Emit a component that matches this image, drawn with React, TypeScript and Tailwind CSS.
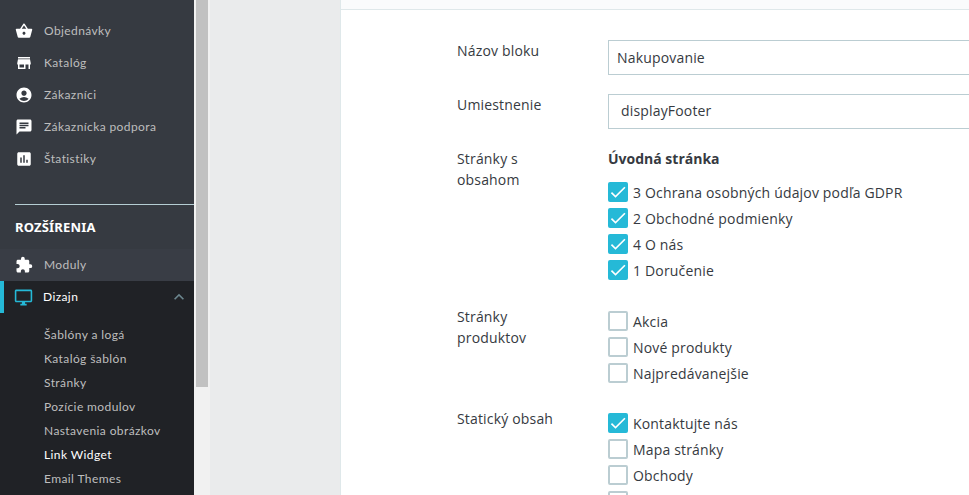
import { MdAccountCircle, MdAssessment, MdCheck, MdChat, MdExtension, MdKeyboardArrowUp, MdOutlineDesktopWindows, MdShoppingBasket, MdStore } from 'react-icons/md'
import type { ReactNode } from 'react'

function NavItem({ icon, label }: { icon: ReactNode; label: string }) {
  return (
    <div className="flex h-8 items-center pl-[15px]">
      <span className="flex w-[29px] text-white">{icon}</span>
      <span className="text-xs tracking-[0.4px] text-[#bebebe]">{label}</span>
    </div>
  )
}

function SubItem({ label, active }: { label: string; active?: boolean }) {
  return (
    <div className={`flex h-6 items-center pl-11 text-xs tracking-[0.4px] ${active ? 'text-white' : 'text-[#bebebe]'}`}>
      {label}
    </div>
  )
}

function Sidebar() {
  return (
    <div className="h-full w-[194px] shrink-0 overflow-hidden bg-[#363a41] font-['Lato',sans-serif]">
      <div className="pt-[15px]">
        <NavItem icon={<MdShoppingBasket size={18} />} label="Objednávky" />
        <NavItem icon={<MdStore size={18} />} label="Katalóg" />
        <NavItem icon={<MdAccountCircle size={18} />} label="Zákazníci" />
        <NavItem icon={<MdChat size={18} />} label="Zákaznícka podpora" />
        <NavItem icon={<MdAssessment size={18} />} label="Štatistiky" />
      </div>
      <div className="mt-[29px] ml-[15px] border-t border-[#b5cdd3]" />
      <div className="mt-[13px] pl-[15px] font-['Noto_Sans',sans-serif] text-[13px] leading-[18px] font-bold text-white">ROZŠÍRENIA</div>
      <div className="mt-[13px] bg-[#393d45]">
        <NavItem icon={<MdExtension size={18} />} label="Moduly" />
      </div>
      <div className="h-full bg-[#202226]">
        <div className="flex h-8 items-center border-l-4 border-[#25b9d7] pl-[10px]">
          <span className="flex w-[29px] text-[#25b9d7]"><MdOutlineDesktopWindows size={19} /></span>
          <span className="flex-1 text-xs tracking-[0.4px] text-white">Dizajn</span>
          <span className="pr-[5px] text-[#6c868e]"><MdKeyboardArrowUp size={20} /></span>
        </div>
        <div className="pt-[10px]">
          <SubItem label="Šablóny a logá" />
          <SubItem label="Katalóg šablón" />
          <SubItem label="Stránky" />
          <SubItem label="Pozície modulov" />
          <SubItem label="Nastavenia obrázkov" />
          <SubItem label="Link Widget" active />
          <SubItem label="Email Themes" />
        </div>
      </div>
    </div>
  )
}

function Check({ label, checked }: { label: string; checked?: boolean }) {
  return (
    <div className="flex h-5 items-center">
      <span className={`flex size-5 shrink-0 items-center justify-center rounded-[2px] ${checked ? 'bg-[#25b9d7] text-white' : 'border-2 border-[#bbcdd2]'}`}>
        {checked && <MdCheck size={20} />}
      </span>
      <span className="ml-[5px] whitespace-nowrap pt-px">{label}</span>
    </div>
  )
}

function Row({ label, children, className = '', labelClassName = '' }: { label: string; children: ReactNode; className?: string; labelClassName?: string }) {
  return (
    <div className={`flex ${className}`}>
      <div className="w-[151px] shrink-0 pr-[41px]">
        <div className={`leading-[21px] ${labelClassName}`}>{label}</div>
      </div>
      <div className="min-w-0 flex-1">{children}</div>
    </div>
  )
}

export default function App() {
  return (
    <div className="flex h-[495px] w-[969px] overflow-hidden bg-[#eaebec] font-['Open_Sans',sans-serif] text-sm tracking-[0.17px] text-[#363a41]">
      <Sidebar />
      <div className="h-full w-4 shrink-0 bg-[#f1f1f1] pl-[2px]">
        <div className="h-[387px] w-3 bg-[#c1c1c1]" />
      </div>
      <div className="w-[130px] shrink-0" />
      <div className="min-w-0 flex-1 overflow-hidden border-l border-[#dfe8ea] bg-white">
        <div className="h-[10px] border-b border-[#dfe8ea] bg-[#fafbfc]" />
        <div className="pt-[30px] pl-[116px]">
          <Row label="Názov bloku">
            <div className="-mr-8 flex h-[35px] items-center border border-[#bbcdd2] pl-2">Nakupovanie</div>
          </Row>
          <Row label="Umiestnenie" className="mt-[19px]">
            <div className="-mr-8 flex h-[35px] items-center border border-[#bbcdd2] pb-px pl-3">displayFooter</div>
          </Row>
          <Row label="Stránky s obsahom" className="mt-5" labelClassName="-mt-px">
            <div className="leading-[20px] font-bold tracking-normal">Úvodná stránka</div>
            <div className="mt-[13px] flex flex-col gap-[6px]">
              <Check checked label="3 Ochrana osobných údajov podľa GDPR" />
              <Check checked label="2 Obchodné podmienky" />
              <Check checked label="4 O nás" />
              <Check checked label="1 Doručenie" />
            </div>
          </Row>
          <Row label="Stránky produktov" className="mt-[31px]" labelClassName="-mt-[5px]">
            <div className="flex flex-col gap-[6px]">
              <Check label="Akcia" />
              <Check label="Nové produkty" />
              <Check label="Najpredávanejšie" />
            </div>
          </Row>
          <Row label="Statický obsah" className="mt-[30px]" labelClassName="-mt-[5px]">
            <div className="flex flex-col gap-[6px]">
              <Check checked label="Kontaktujte nás" />
              <Check label="Mapa stránky" />
              <Check label="Obchody" />
              <Check label="" />
            </div>
          </Row>
        </div>
      </div>
    </div>
  )
}
